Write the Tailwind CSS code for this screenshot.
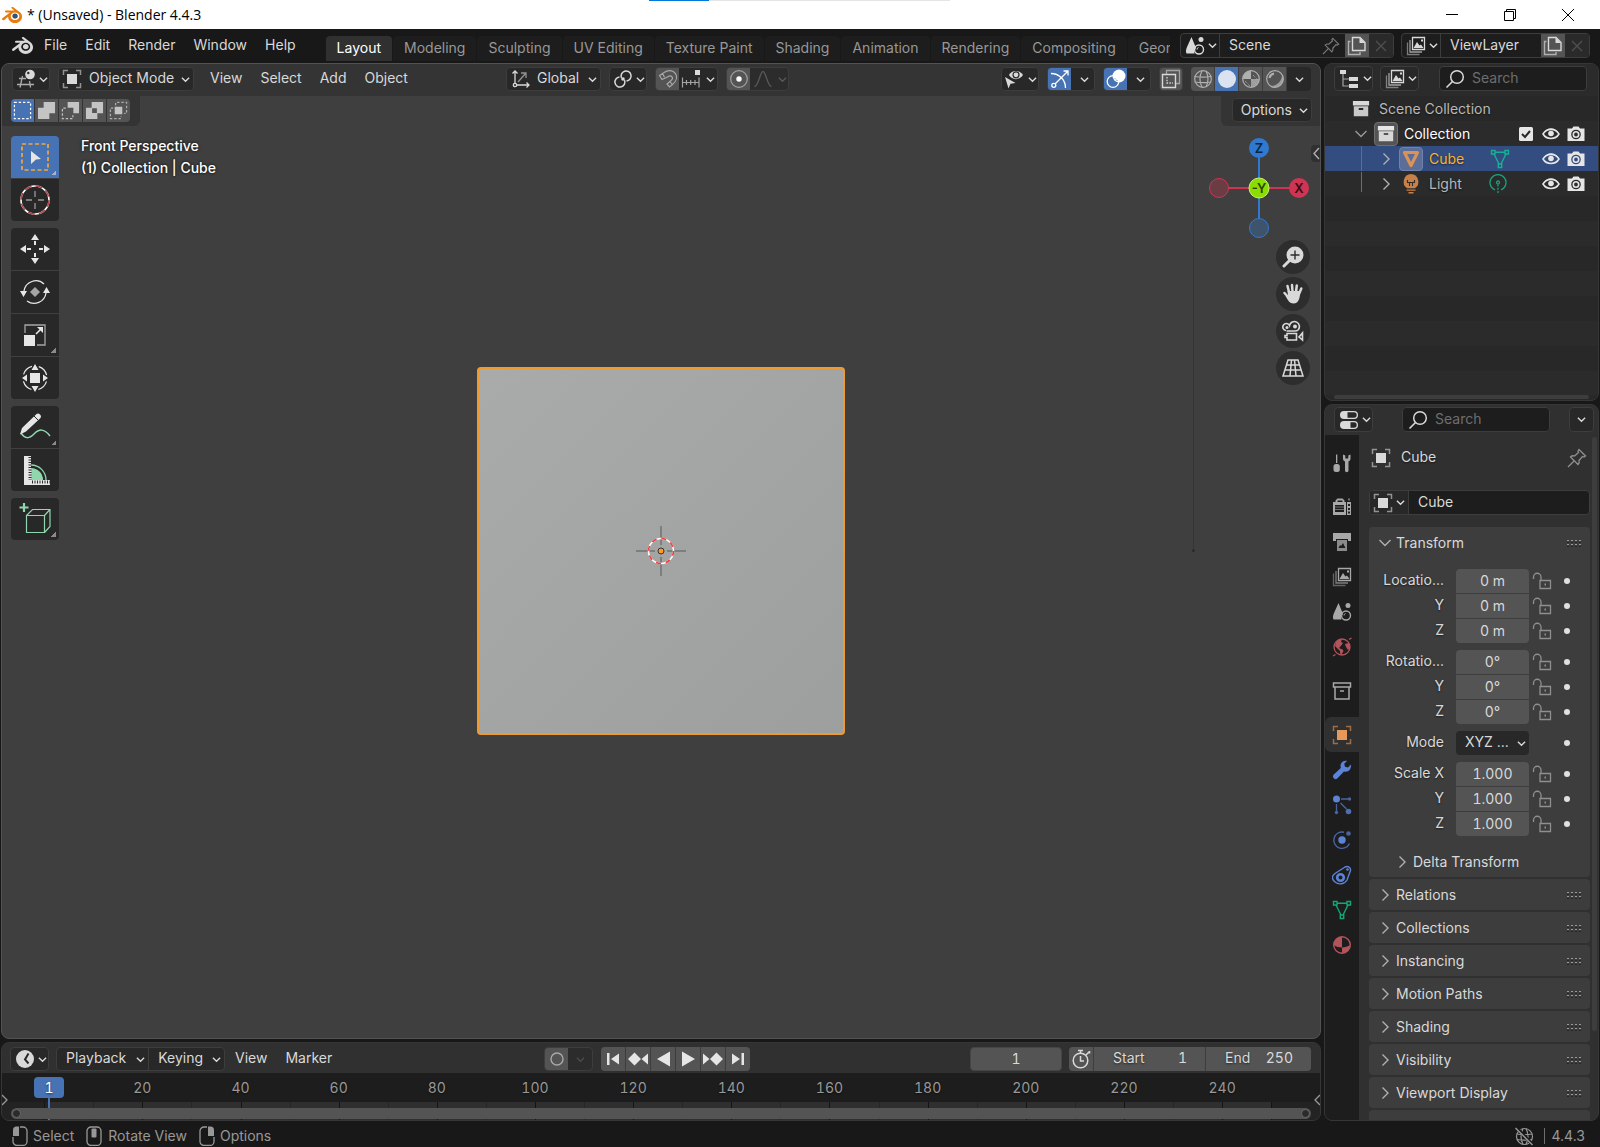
<!DOCTYPE html>
<html lang="en">
<head>
    <meta charset="UTF-8">
    <meta name="viewport" content="width=device-width, initial-scale=1.0">
    <title>* (Unsaved) - Blender 4.4.3</title>
    <script src="https://cdn.jsdelivr.net/npm/@tailwindcss/browser@4"></script>
    <style>
        body { font-family: Inter, sans-serif; }
        input::placeholder { color: #6e6e6e; opacity: 1; }
    </style>
</head>
<body class="flex h-screen flex-col overflow-hidden bg-[#181818] text-sm leading-5 text-[#d9d9d9]">

    <!-- Icon set -->
    <svg class="hidden">
        <symbol id="blender" viewBox="0 0 24 24"><path fill="currentColor" d="M12.51 13.214c.046-.8.438-1.506 1.03-2.006a3.424 3.424 0 0 1 2.212-.79c.85 0 1.631.3 2.211.79.592.5.983 1.206 1.028 2.005.045.823-.285 1.586-.865 2.153a3.389 3.389 0 0 1-2.374.938 3.393 3.393 0 0 1-2.376-.938c-.58-.567-.91-1.33-.865-2.152M7.35 14.831c.006.314.106.922.256 1.398a7.372 7.372 0 0 0 1.593 2.757 8.227 8.227 0 0 0 2.787 2.001 8.947 8.947 0 0 0 3.66.76 8.964 8.964 0 0 0 3.657-.772 8.285 8.285 0 0 0 2.785-2.01 7.428 7.428 0 0 0 1.592-2.762 6.964 6.964 0 0 0 .25-3.074 7.123 7.123 0 0 0-1.016-2.779 7.764 7.764 0 0 0-1.852-2.043h.002L13.566 2.55l-.02-.015c-.492-.378-1.319-.376-1.86.002-.547.382-.609 1.015-.123 1.415l-.001.001 3.126 2.543-9.53.01h-.013c-.788.001-1.545.518-1.695 1.172-.154.665.38 1.217 1.2 1.22V8.9l4.83-.01-8.62 6.617-.034.025c-.813.622-1.075 1.658-.563 2.315.52.667 1.625.668 2.447.004L7.414 14s-.069.52-.063.831zm12.09 1.741c-.97.988-2.326 1.548-3.795 1.55-1.47.004-2.827-.552-3.797-1.538a4.51 4.51 0 0 1-1.036-1.622 4.282 4.282 0 0 1 .282-3.519 4.702 4.702 0 0 1 1.153-1.371c.942-.768 2.141-1.183 3.396-1.185 1.256-.002 2.455.41 3.398 1.175.48.391.87.854 1.152 1.367a4.28 4.28 0 0 1 .522 1.706 4.236 4.236 0 0 1-.239 1.811 4.54 4.54 0 0 1-1.035 1.626"/></symbol>
        <symbol id="down" viewBox="0 0 10 10"><path d="M1 3l4 4 4-4" fill="none" stroke="currentColor" stroke-width="1.5"/></symbol>
        <symbol id="open" viewBox="0 0 14 14"><path d="M1.500 4l5.500 5.500L12.500 4" fill="none" stroke="currentColor" stroke-width="1.400"/></symbol>
        <symbol id="closed" viewBox="0 0 14 14"><path d="M4.500 1.500L10 7l-5.500 5.500" fill="none" stroke="currentColor" stroke-width="1.400"/></symbol>
        <symbol id="grid-ball" viewBox="0 0 20 20"><g fill="none" stroke="currentColor" stroke-width="1.300" opacity=".75"><path d="M3 9.500h7M1 15.500h17M6.500 7L4 18.500M13.500 12l1 6.500"/></g><circle cx="14" cy="5.500" r="4.800" fill="currentColor"/><circle cx="12.300" cy="4" r="1.200" fill="#282828"/></symbol>
        <symbol id="object" viewBox="0 0 20 20"><path d="M1.500 6V1.500H6M14 1.500h4.500V6M18.500 14v4.500H14M6 18.500H1.500V14" fill="none" stroke="currentColor" stroke-width="1.500" opacity=".6"/><path d="M5 5h10v10H5z" fill="currentColor"/></symbol>
        <symbol id="axes" viewBox="0 0 20 20"><g fill="none" stroke="currentColor" stroke-width="1.300"><path d="M4 15V2M1.500 4.500L4 2l2.500 2.500M5.500 16H18M15.500 13.500L18 16l-2.500 2.500"/><circle cx="4" cy="16" r="1.700"/><path d="M7 13l7.500-8.500M10 4h5v5" opacity=".6"/></g></symbol>
        <symbol id="pivot" viewBox="0 0 20 20"><g fill="none" stroke="currentColor" stroke-width="1.500"><path d="M8.500 9a5 5 0 1 1 5 3M11.500 11a5 5 0 1 1-5-3"/></g><circle cx="10" cy="10" r="1.800" fill="currentColor"/></symbol>
        <symbol id="magnet" viewBox="0 0 20 20"><path d="M1.500 6.500L6 3.500c4-2.800 9-2.500 11.500 1.200 2.200 3.500.5 7.800-3 10.800l-3 2.500-2.500-3 3.500-3c2-1.600 2.500-3 1.500-4.200-1.200-1.300-2.800-1-4.500.2L4 10.500zM4.500 4.500l2 3.700M11.500 12l2.700 3.500" fill="none" stroke="currentColor" stroke-width="1.200"/></symbol>
        <symbol id="snap" viewBox="0 0 20 20"><path d="M1.500 8.500v10M18 8.500v10M1.500 13.500H18M5.500 11v5M9.700 11v5M14 11v5" fill="none" stroke="currentColor" stroke-width="1.200" opacity=".7"/><path d="M14 1h5v5h-5z" fill="currentColor"/></symbol>
        <symbol id="proportional" viewBox="0 0 20 20"><circle cx="10" cy="10" r="8.300" fill="none" stroke="currentColor" stroke-width="1.200" opacity=".45"/><circle cx="10" cy="10" r="2.700" fill="currentColor"/></symbol>
        <symbol id="falloff" viewBox="0 0 20 20"><path d="M1.500 17.500C6 16.500 7 2.500 10 2.500s4 14 8.500 15" fill="none" stroke="currentColor" stroke-width="1.300"/></symbol>
        <symbol id="eye-cursor" viewBox="0 0 20 20"><path d="M5 6C8 .500 15.500.500 19 6c-3.500 5.500-11 5.500-14 0z" fill="currentColor"/><circle cx="12" cy="5.800" r="3" fill="none" stroke="#282828" stroke-width="1.200"/><path d="M1 8l10.500 6-5 .800L4.500 19.500z" fill="currentColor"/></symbol>
        <symbol id="gizmo" viewBox="0 0 20 20"><g fill="none" stroke="currentColor" stroke-width="1.300"><path d="M1 4.500c8 0 14.500 6 14.500 14.500M5 15l13-13M13.500 2H18v4.500"/><circle cx="3.800" cy="16.300" r="2" fill="#4772b3"/></g></symbol>
        <symbol id="overlay" viewBox="0 0 20 20"><circle cx="7" cy="12.500" r="5.800" fill="none" stroke="currentColor" stroke-width="1.300"/><circle cx="13" cy="7" r="6.500" fill="currentColor"/><path d="M9 9.500l3 3" stroke="#4772b3" stroke-dasharray="1.200 1.200"/></symbol>
        <symbol id="xray" viewBox="0 0 20 20"><path d="M5.500 5V1.500h13v13H15" fill="none" stroke="currentColor" stroke-width="1.300" opacity=".6"/><path d="M1.500 5.500h13v13h-13z" fill="none" stroke="currentColor" stroke-width="1.400"/><path d="M6 8v6h6" fill="none" stroke="currentColor" stroke-width="1.300" stroke-dasharray="1.500 1.300"/></symbol>
        <symbol id="wire" viewBox="0 0 20 20"><g fill="none" stroke="currentColor" stroke-width="1.200"><circle cx="10" cy="10" r="8.300"/><path d="M1.700 7.500c5 .800 11.600.800 16.600 0M1.700 13c5 .800 11.600.800 16.600 0M9 1.700c-2.500 5-2.500 11.600 0 16.600M13 2c2.500 5 2.500 11 0 16"/></g></symbol>
        <symbol id="solid" viewBox="0 0 20 20"><circle cx="10" cy="10" r="9" fill="currentColor"/></symbol>
        <symbol id="matprev" viewBox="0 0 20 20"><circle cx="10" cy="10" r="8.300" fill="none" stroke="currentColor" stroke-width="1.200"/><path d="M10 1.700A8.300 8.300 0 0 0 1.700 10H10z" fill="currentColor"/><path d="M10 10h8.300A8.300 8.300 0 0 1 10 18.300z" fill="currentColor" opacity=".8"/><path d="M10 10l6 6M12 6l5 5M4 12l5 5" stroke="currentColor" stroke-dasharray="1 1"/></symbol>
        <symbol id="rendered" viewBox="0 0 20 20"><circle cx="10" cy="10" r="8.300" fill="none" stroke="currentColor" stroke-width="1.200"/><path d="M4.500 9c.500-2.500 2-4 4.500-4.500" fill="none" stroke="currentColor" stroke-width="2.200"/><path d="M17 6c0 6-5 11-11 11l4 1.300A8.300 8.300 0 0 0 18.300 10z" fill="currentColor" opacity=".8"/></symbol>
        <symbol id="scene" viewBox="0 0 20 20"><path d="M6.500 1l4.500 11a6 6 0 0 0-1.500 5.500H1.500C.500 15.500 1 13.500 2 11z" fill="currentColor"/><circle cx="16" cy="3.500" r="2.500" fill="currentColor"/><circle cx="14" cy="13.500" r="4.500" fill="none" stroke="currentColor" stroke-width="1.400"/><path d="M12 13.500a2 2 0 0 1 1.500-2" fill="none" stroke="currentColor"/></symbol>
        <symbol id="layers" viewBox="0 0 20 20"><g fill="none" stroke="currentColor" stroke-width="1.300"><path d="M6.500 1.500h12v12h-12z"/><path d="M4 4v12h12" opacity=".7"/><path d="M1.500 6.500v12h12" opacity=".5"/></g><path d="M7.500 12l3.500-6 2.500 3.500 1.500-1 2.500 3.500zM15 3.500h2v2h-2z" fill="currentColor"/></symbol>
        <symbol id="copy" viewBox="0 0 20 20"><path d="M5.500 1.500H13l5 5v8H5.500z" fill="none" stroke="currentColor" stroke-width="1.400"/><path d="M12.500 1.500v5.500H18z" fill="currentColor"/><path d="M3.500 5.500h-2v13H13v-2.500" fill="none" stroke="currentColor" stroke-width="1.400" opacity=".7"/></symbol>
        <symbol id="cross" viewBox="0 0 20 20"><path d="M5 5l10 10M15 5L5 15" stroke="currentColor" stroke-width="1.300"/></symbol>
        <symbol id="pin" viewBox="0 0 20 20"><path d="M1 19l6-6M12 1.500L18.500 8l-1.500 1-1.500-.500-3.500 4c.500 1.500.200 2.700-1 4L3.500 9c1.200-1.200 2.500-1.500 4-1l4-3.500L11 3z" fill="none" stroke="currentColor" stroke-width="1.300"/></symbol>
        <symbol id="tree" viewBox="0 0 20 20"><path d="M1 1h6v4H1zM10 8h9v4h-9zM10 15h9v4h-9z" fill="currentColor"/><path d="M4 5v12h6M4 10h6" fill="none" stroke="currentColor" stroke-width="1.200" opacity=".7"/></symbol>
        <symbol id="search" viewBox="0 0 20 20"><circle cx="12" cy="8" r="6.300" fill="none" stroke="currentColor" stroke-width="1.500"/><path d="M7.500 12.500L1.500 18.500" stroke="currentColor" stroke-width="1.600"/></symbol>
        <symbol id="box" viewBox="0 0 20 20"><path d="M1 1h18v5H1z" fill="currentColor"/><path fill-rule="evenodd" d="M2 7h16v11H2zM7.500 9v2h5V9z" fill="currentColor" opacity=".9"/></symbol>
        <symbol id="box-line" viewBox="0 0 20 20"><path d="M1.500 2h17v4h-17zM3 6v12h14V6" fill="none" stroke="currentColor" stroke-width="1.500"/><path d="M8 10h4" stroke="currentColor" stroke-width="1.500"/></symbol>
        <symbol id="check" viewBox="0 0 14 14"><rect width="14" height="14" rx="1.500" fill="currentColor"/><path d="M3 7l3 3 5-6" fill="none" stroke="#282828" stroke-width="2"/></symbol>
        <symbol id="eye" viewBox="0 0 20 20"><path d="M2 10c3.500-6 12.500-6 16 0-3.500 6-12.500 6-16 0z" fill="none" stroke="currentColor" stroke-width="1.500"/><circle cx="10" cy="9.500" r="2.800" fill="currentColor"/><path d="M3 9c2-3.500 5-4.200 7-4.200S15 5.500 17 9" fill="none" stroke="currentColor" stroke-width="1.200"/></symbol>
        <symbol id="camera" viewBox="0 0 20 20"><path fill-rule="evenodd" d="M1.500 4.500H6L7.500 2.500h5l1.500 2h4.500v12.500h-17zM10 5.700a4.800 4.800 0 1 0 0 9.600 4.800 4.800 0 0 0 0-9.600z" fill="currentColor"/><circle cx="10" cy="10.500" r="2.700" fill="none" stroke="currentColor" stroke-width="1.600"/></symbol>
        <symbol id="mesh-solid" viewBox="0 0 20 20"><path d="M3.500 3.500h13L10 16.500z" fill="none" stroke="currentColor" stroke-width="3.200" stroke-linejoin="round"/></symbol>
        <symbol id="mesh" viewBox="0 0 20 20"><g fill="none" stroke="currentColor" stroke-width="1.400"><path d="M1.500 1.500H5V5H1.500zM15 1.500h3.500V5H15zM8.300 15h3.400v3.500H8.300zM5 3.200h10M4 5l5 10M16 5l-5 10"/></g></symbol>
        <symbol id="bulb" viewBox="0 0 20 20"><path d="M10 0a7.800 7.800 0 0 1 4 14.200H6A7.800 7.800 0 0 1 10 0z" fill="currentColor"/><path d="M6.500 6v2.500h2V12M13.500 6v2.500h-2V12M8.500 8.500h3" fill="none" stroke="#2b2b2b" stroke-width="1.100"/><path d="M5.500 15.500h9v1.300h-9zM7.500 18h5v1.500h-5z" fill="currentColor"/></symbol>
        <symbol id="light-data" viewBox="0 0 20 20"><g fill="none" stroke="currentColor" stroke-width="1.300"><path d="M7 16a8 8 0 1 1 6 0"/><circle cx="10" cy="8.500" r="1.500"/><path d="M10 10.500v9" stroke-dasharray="2 1.300"/></g></symbol>
        <symbol id="props" viewBox="0 0 20 20"><rect x="1" y="1" width="18" height="8" rx="4" fill="currentColor"/><path d="M8.500 2.300H15a2.700 2.700 0 0 1 0 5.400H8.500z" fill="#282828"/><rect x="1" y="11" width="18" height="8" rx="4" fill="currentColor"/><path d="M11.500 12.300H15a2.700 2.700 0 0 1 0 5.400h-3.500z" fill="#282828"/></symbol>
        <symbol id="tool" viewBox="0 0 20 20"><path d="M4 1.500h1.300V10H4z" fill="currentColor"/><rect x="1.500" y="11" width="6.300" height="8" rx="2.500" fill="currentColor"/><path d="M11 1.500v4c0 1.500.800 2.500 2 3v9a1.500 1.500 0 0 0 3.500 0v-9c1.200-.500 2-1.500 2-3v-4l-2.200 1v3h-3v-3z" fill="currentColor"/></symbol>
        <symbol id="render" viewBox="0 0 20 20"><path fill-rule="evenodd" d="M1 5h2.500V3.500l2-2h5l2 2V5H14v13H1zM5.500 3.500V5h5V3.500z" fill="currentColor"/><path d="M3 8h9v7H3z" fill="#1d1d1d"/><path d="M3 10h9M3 12.500h9" stroke="currentColor" stroke-width=".6"/><path fill-rule="evenodd" d="M15 5h4v13h-4zM16 7v2h2V7zm0 4v2h2v-2zm0 3.500v2h2v-2z" fill="currentColor"/><path d="M16 1.500h2v2h-2z" fill="currentColor" opacity=".6"/></symbol>
        <symbol id="output" viewBox="0 0 20 20"><path d="M1 1h18v8h-3V7H4v2H1z" fill="currentColor"/><path fill-rule="evenodd" d="M5 8h10v11H5zM6.500 16h7L11 11l-2 3-1-1z" fill="currentColor" opacity=".8"/></symbol>
        <symbol id="world" viewBox="0 0 20 20"><circle cx="10" cy="10" r="8" fill="none" stroke="currentColor" stroke-width="1.300"/><path d="M4 5c2-2 4-3 6-3l-1 3 2 1-3 4-1 1 2 1c2 0 3 2 2 3l-2 3c-1-1-1-3-1-4L3 9zM13 7l4-1 1 5-2 2-2-3z" fill="currentColor"/><path d="M17 2.500L19.500 1M1 19l2.500-1.500" stroke="currentColor" stroke-width="1.300"/></symbol>
        <symbol id="wrench" viewBox="0 0 20 20"><path d="M19 4.500l-3 3-3-.700-.800-3 3-3C12 0 8.500 2 8.500 6l.300 2L1.800 14.500a2.600 2.600 0 0 0 3.700 3.700L12 11.500c4.500 1 7.500-2 7-7z" fill="currentColor"/></symbol>
        <symbol id="particles" viewBox="0 0 20 20"><circle cx="4.500" cy="4" r="3.500" fill="currentColor"/><circle cx="16.500" cy="16.500" r="2.800" fill="currentColor" opacity=".8"/><g fill="none" stroke="currentColor" stroke-width="1.300" opacity=".7"><path d="M9 4h7M4.500 9v7M8.500 8l6 6"/></g><g fill="currentColor" opacity=".7"><circle cx="17.500" cy="4" r="1.700"/><circle cx="4.500" cy="17.500" r="1.700"/></g></symbol>
        <symbol id="physics" viewBox="0 0 20 20"><circle cx="10" cy="10" r="3.700" fill="currentColor"/><g opacity=".7"><path d="M12 2.200A8.200 8.200 0 1 0 17.500 13.500" fill="none" stroke="currentColor" stroke-width="1.400"/><circle cx="16.500" cy="3.500" r="2.300" fill="currentColor"/></g></symbol>
        <symbol id="constraint" viewBox="0 0 20 20"><g fill="none" stroke="currentColor"><path d="M3 8.500L13 2c3-1.500 6 .500 5.500 3.500L15 15c-2.500 4.500-8.500 5-12 2s-3.500-6 0-8.500z" stroke-width="1.400"/><circle cx="8.500" cy="12.500" r="3.300" stroke-width="2.600"/></g><circle cx="15.500" cy="4.500" r="1.300" fill="currentColor"/></symbol>
        <symbol id="material" viewBox="0 0 20 20"><circle cx="10" cy="10" r="8.300" fill="none" stroke="currentColor" stroke-width="1.400"/><path d="M10 1.700A8.300 8.300 0 0 0 1.700 10c2.500 1.800 5.500 2.500 8.300 2.500zM10 12.500c3-.100 6-.800 8.300-2.500a8.300 8.300 0 0 1-8.300 8.300z" fill="currentColor"/></symbol>
        <symbol id="unlock" viewBox="0 0 20 20"><path d="M1.500 8V6a3.700 3.700 0 0 1 7.500 0V9.500M8 9.500h10.500v8H8z" fill="none" stroke="currentColor" stroke-width="1.300"/><path d="M12.500 12.500h1.500v2h-1.500z" fill="currentColor"/></symbol>
        <symbol id="grip" viewBox="0 0 16 8"><g fill="#999"><path d="M1 1h2v1.500H1zM5 1h2v1.500H5zM9 1h2v1.500H9zM13 1h2v1.500h-2zM1 5h2v1.500H1zM5 5h2v1.500H5zM9 5h2v1.500H9zM13 5h2v1.500h-2z"/></g><path d="M1 3h14M1 7h14" stroke="#111" stroke-dasharray="2 2"/></symbol>
        <symbol id="clock" viewBox="0 0 20 20"><circle cx="10" cy="10" r="9" fill="currentColor"/><path d="M13.500 4.500L10 10.500l3.500 4" fill="none" stroke="#282828" stroke-width="2"/></symbol>
        <symbol id="stopwatch" viewBox="0 0 20 20"><g fill="none" stroke="currentColor" stroke-width="1.500"><circle cx="9.500" cy="11.500" r="7.300"/><path d="M9.500 7v5H13M7 1.500h5M9.500 2v2.500M15 6l3-3M18.500 2v2.500"/></g></symbol>
        <symbol id="mouse-l" viewBox="0 0 16 20"><rect x="1" y="1" width="14" height="18.500" rx="4" fill="none" stroke="currentColor" stroke-width="1.300"/><path d="M0 0h8v11H0z" fill="#181818"/><path d="M1 10V4a3.500 3.500 0 0 1 3.500-3.500H7V10z" fill="currentColor"/></symbol>
        <symbol id="mouse-m" viewBox="0 0 16 20"><rect x="1" y="1" width="14" height="18.500" rx="4" fill="none" stroke="currentColor" stroke-width="1.300"/><rect x="5.500" y="2.500" width="5" height="9" rx="1" fill="currentColor"/></symbol>
        <symbol id="mouse-r" viewBox="0 0 16 20"><rect x="1" y="1" width="14" height="18.500" rx="4" fill="none" stroke="currentColor" stroke-width="1.300"/><path d="M8 0h8v11H8z" fill="#181818"/><path d="M9 10V.500h2.500A3.500 3.500 0 0 1 15 4v6z" fill="currentColor"/></symbol>
        <symbol id="offline" viewBox="0 0 20 20"><g fill="none" stroke="currentColor" stroke-width="1.200"><circle cx="10.500" cy="10.500" r="8"/><path d="M2.500 8c5 .700 11 .700 16 0M3 13.500c5 .700 10 .700 15 0M9 2.500c-2.500 5-2.500 11 0 16M12 2.500c2.500 5 2.500 11 0 16"/></g><path d="M2 1l17 18" stroke="#181818" stroke-width="3"/><path d="M1.500 2l17 17" stroke="currentColor" stroke-width="1.400"/></symbol>
    </svg>

    <!-- Window title bar -->
    <header class="relative flex h-[29px] shrink-0 items-center bg-white text-black">
        <svg class="ml-[2px] size-5"><g class="text-[#e87d0d]"><use href="#blender"/></g><circle cx="13" cy="11" r="2.500" fill="#265787"/></svg>
        <span class="ml-[5px] font-['Open_Sans'] text-sm">* (Unsaved) - Blender 4.4.3</span>
        <div class="absolute left-[649px] top-0 flex h-px w-[301px] bg-[#e5e5e5]"><div class="w-[60px] bg-[#0078d7]"></div></div>
        <div class="ml-auto flex items-center gap-[46px] pr-[26px]">
            <button aria-label="Minimize"><svg class="size-3" viewBox="0 0 12 12"><path d="M0 5.500h12" stroke="#000"/></svg></button>
            <button aria-label="Restore"><svg class="size-3" viewBox="0 0 12 12"><path d="M.500 2.500h9v9h-9zM2.500 2.500v-2h9v9h-2" fill="none" stroke="#000"/></svg></button>
            <button aria-label="Close"><svg class="size-3" viewBox="0 0 12 12"><path d="M0 0l12 12M12 0L0 12" stroke="#000"/></svg></button>
        </div>
    </header>

    <!-- Top bar -->
    <div class="flex h-[34px] shrink-0 [text-shadow:0_1px_2px_#000]">
        <nav class="flex h-8 shrink-0 items-center pl-3">
            <button class="mr-[11px]" aria-label="Blender"><svg class="size-[21px]"><use href="#blender"/></svg></button>
            <div class="flex gap-[18px] pr-[30px]">
                <button>File</button><button>Edit</button><button>Render</button><button>Window</button><button>Help</button>
            </div>
        </nav>
        <div class="mt-[7px] flex h-[25px] min-w-0 flex-1 gap-px overflow-hidden whitespace-nowrap text-[#989898]">
            <button class="shrink-0 rounded-t bg-[#303030] px-[11px] pb-[2px] text-white">Layout</button>
            <button class="shrink-0 rounded-t bg-[#1d1d1d] px-[11px] pb-[2px]">Modeling</button>
            <button class="shrink-0 rounded-t bg-[#1d1d1d] px-[11px] pb-[2px]">Sculpting</button>
            <button class="shrink-0 rounded-t bg-[#1d1d1d] px-[11px] pb-[2px]">UV Editing</button>
            <button class="shrink-0 rounded-t bg-[#1d1d1d] px-[11px] pb-[2px]">Texture Paint</button>
            <button class="shrink-0 rounded-t bg-[#1d1d1d] px-[11px] pb-[2px]">Shading</button>
            <button class="shrink-0 rounded-t bg-[#1d1d1d] px-[11px] pb-[2px]">Animation</button>
            <button class="shrink-0 rounded-t bg-[#1d1d1d] px-[11px] pb-[2px]">Rendering</button>
            <button class="shrink-0 rounded-t bg-[#1d1d1d] px-[11px] pb-[2px]">Compositing</button>
            <button class="shrink-0 rounded-t bg-[#1d1d1d] px-[11px] pb-[2px]">Geometry Nodes</button>
        </div>
        <div class="mt-1 flex shrink-0 gap-[7px] pl-[10px] pr-[10px]">
            <div class="flex h-[25px] w-[214px] overflow-hidden rounded border border-[#3d3d3d] bg-[#1d1d1d]">
                <button class="flex w-[39px] items-center gap-[3px] border-r border-[#3d3d3d] pl-1" aria-label="Browse scene"><svg class="size-5"><use href="#scene"/></svg><svg class="size-[9px]"><use href="#down"/></svg></button>
                <input class="min-w-0 flex-1 bg-transparent pb-[2px] pl-[9px] outline-none" value="Scene" aria-label="Scene">
                <button class="px-[5px] text-[#7a7a7a]" aria-label="Pin scene"><svg class="size-[18px]"><use href="#pin"/></svg></button>
                <button class="flex w-6 items-center justify-center bg-[#545454]" aria-label="New scene"><svg class="size-5"><use href="#copy"/></svg></button>
                <button class="flex w-6 items-center justify-center bg-[#2a2a2a] text-[#505050]" aria-label="Delete scene"><svg class="size-5"><use href="#cross"/></svg></button>
            </div>
            <div class="flex h-[25px] w-[189px] overflow-hidden rounded border border-[#3d3d3d] bg-[#1d1d1d]">
                <button class="flex w-[39px] items-center gap-[3px] border-r border-[#3d3d3d] pl-1" aria-label="Browse view layer"><svg class="size-5"><use href="#layers"/></svg><svg class="size-[9px]"><use href="#down"/></svg></button>
                <input class="min-w-0 flex-1 bg-transparent pb-[2px] pl-[9px] outline-none" value="ViewLayer" aria-label="View layer">
                <button class="flex w-6 items-center justify-center bg-[#545454]" aria-label="New view layer"><svg class="size-5"><use href="#copy"/></svg></button>
                <button class="flex w-6 items-center justify-center bg-[#2a2a2a] text-[#505050]" aria-label="Delete view layer"><svg class="size-5"><use href="#cross"/></svg></button>
            </div>
        </div>
    </div>

    <main class="flex min-h-0 flex-1 gap-[3px] px-px [text-shadow:0_1px_2px_#0008]">
        <div class="flex min-w-0 flex-1 flex-col gap-[3px]">

            <!-- 3D viewport -->
            <section class="relative flex min-h-0 flex-1 flex-col overflow-hidden rounded-lg border border-[#525252] bg-[#3f3f3f]">
                <div class="absolute bottom-1/2 right-[126px] top-8 w-px bg-[#343434]"><span class="absolute -bottom-px -left-px size-[3px] rounded-full bg-[#2b2b2b]"></span></div>
                <div class="absolute inset-0 flex items-center justify-center">
                    <div class="flex size-[368px] items-center justify-center rounded-sm border-2 border-[#ef9a31] bg-linear-to-br from-[#a9abaa] to-[#9d9f9e]">
                        <svg class="size-[52px]" viewBox="-26 -26 52 52"><path d="M-25 0h19M6 0h19M0-25v19M0 6v19" stroke="#727372" stroke-width="1.500"/><circle r="12.500" fill="none" stroke="#fff" stroke-width="1.500"/><circle r="12.500" fill="none" stroke="#f33" stroke-width="1.500" stroke-dasharray="4.900 4.917"/><circle r="3" fill="#ff9a1f" stroke="#333"/></svg>
                    </div>
                </div>

                <div class="relative flex h-8 shrink-0 items-start bg-[#343434] pl-[10px] pr-[9px] pt-[3px]">
                    <div class="flex w-[494px] shrink-0 items-center gap-4">
                        <div class="flex gap-2">
                            <button class="flex h-6 w-[38px] items-center gap-[3px] rounded border border-[#3d3d3d] bg-[#282828] pl-[3px]" aria-label="Editor type"><svg class="size-5"><use href="#grid-ball"/></svg><svg class="size-[9px]"><use href="#down"/></svg></button>
                            <label class="flex h-6 w-[136px] items-center rounded border border-[#3d3d3d] bg-[#282828] pl-[3px] pr-[3px]" aria-label="Mode"><svg class="size-5 shrink-0"><use href="#object"/></svg><select class="min-w-0 flex-1 appearance-none pb-[2px] pl-[7px] outline-none"><option>Object Mode</option><option>Edit Mode</option></select><svg class="size-[9px]"><use href="#down"/></svg></label>
                        </div>
                        <div class="flex gap-[18px] pb-[2px]"><button>View</button><button>Select</button><button>Add</button><button>Object</button></div>
                    </div>
                    <div class="flex gap-2">
                        <label class="flex h-6 w-[95px] items-center rounded border border-[#3d3d3d] bg-[#282828] pl-1 pr-[3px]" aria-label="Orientation"><svg class="size-5 shrink-0"><use href="#axes"/></svg><select class="min-w-0 flex-1 appearance-none pb-[2px] pl-[6px] outline-none"><option>Global</option><option>Local</option></select><svg class="size-[9px] shrink-0"><use href="#down"/></svg></label>
                        <button class="flex h-6 w-[38px] items-center gap-[3px] rounded border border-[#3d3d3d] bg-[#282828] pl-[3px]" aria-label="Pivot point"><svg class="size-5"><use href="#pivot"/></svg><svg class="size-[9px]"><use href="#down"/></svg></button>
                        <div class="flex h-6 overflow-hidden rounded border border-[#3d3d3d] bg-[#282828]">
                            <button class="flex w-[23px] items-center justify-center bg-[#545454] text-[#a8a8a8]" aria-label="Snap"><svg class="size-5"><use href="#magnet"/></svg></button>
                            <button class="flex w-[38px] items-center gap-[5px] pl-[2px]" aria-label="Snap to"><svg class="size-5"><use href="#snap"/></svg><svg class="size-[9px]"><use href="#down"/></svg></button>
                        </div>
                        <div class="flex h-6 overflow-hidden rounded border border-[#3d3d3d] bg-[#2c2c2c]">
                            <button class="flex w-[23px] items-center justify-center bg-[#545454] text-white" aria-label="Proportional editing"><svg class="size-5"><use href="#proportional"/></svg></button>
                            <button class="flex w-[38px] items-center gap-[5px] pl-[3px] text-[#585858]" aria-label="Falloff"><svg class="size-5"><use href="#falloff"/></svg><svg class="size-[9px]"><use href="#down"/></svg></button>
                        </div>
                    </div>
                    <div class="ml-auto flex gap-2">
                        <button class="flex h-6 w-[38px] items-center gap-1 rounded border border-[#3d3d3d] bg-[#282828] pl-[2px]" aria-label="Visibility"><svg class="size-5"><use href="#eye-cursor"/></svg><svg class="size-[9px]"><use href="#down"/></svg></button>
                        <div class="flex h-6 overflow-hidden rounded border border-[#3d3d3d] bg-[#282828]">
                            <button class="flex w-[23px] items-center justify-center bg-[#4772b3] text-white" aria-label="Gizmos"><svg class="size-5"><use href="#gizmo"/></svg></button>
                            <button class="flex w-[23px] items-center justify-center pl-[3px]" aria-label="Gizmo options"><svg class="size-[9px]"><use href="#down"/></svg></button>
                        </div>
                        <div class="flex h-6 overflow-hidden rounded border border-[#3d3d3d] bg-[#282828]">
                            <button class="flex w-[23px] items-center justify-center bg-[#4772b3] text-white" aria-label="Overlays"><svg class="size-5"><use href="#overlay"/></svg></button>
                            <button class="flex w-[23px] items-center justify-center pl-[3px]" aria-label="Overlay options"><svg class="size-[9px]"><use href="#down"/></svg></button>
                        </div>
                        <button class="flex size-6 items-center justify-center rounded border border-[#3d3d3d] bg-[#545454]" aria-label="X-ray"><svg class="size-5"><use href="#xray"/></svg></button>
                        <div class="flex h-6 gap-px overflow-hidden rounded bg-[#3d3d3d] text-[#b0b0b0]">
                            <button class="flex w-[23px] items-center justify-center bg-[#545454]" aria-label="Wireframe"><svg class="size-5"><use href="#wire"/></svg></button>
                            <button class="flex w-[23px] items-center justify-center bg-[#4772b3] text-[#dbe3f0]" aria-label="Solid"><svg class="size-5"><use href="#solid"/></svg></button>
                            <button class="flex w-[23px] items-center justify-center bg-[#545454]" aria-label="Material preview"><svg class="size-5"><use href="#matprev"/></svg></button>
                            <button class="flex w-[23px] items-center justify-center bg-[#545454]" aria-label="Rendered"><svg class="size-5"><use href="#rendered"/></svg></button>
                            <button class="flex w-6 items-center justify-center bg-[#282828] text-[#d9d9d9]" aria-label="Shading options"><svg class="size-[9px]"><use href="#down"/></svg></button>
                        </div>
                    </div>
                </div>

                <div class="relative flex justify-between">
                    <div class="h-[30px] rounded-br-md bg-[#343434] pl-[9px] pr-[10px] pt-[3px]">
                        <div class="flex h-[23px] gap-px overflow-hidden rounded text-[#c4c4c4]">
                            <button class="bg-[#4772b3] px-[2px] text-white" aria-label="Set"><svg class="size-[19px]" viewBox="0 0 20 20"><path d="M1.500 1.500h17v17h-17z" fill="none" stroke="currentColor" stroke-width="1.300" stroke-dasharray="2.500 2"/></svg></button>
                            <button class="bg-[#545454] px-[2px]" aria-label="Extend"><svg class="size-[19px]" viewBox="0 0 20 20"><path d="M7 1h12v12h-6v6H1V7h6z" fill="currentColor"/></svg></button>
                            <button class="bg-[#545454] px-[2px]" aria-label="Subtract"><svg class="size-[19px]" viewBox="0 0 20 20"><path d="M7 1h12v12h-6V7H7z" fill="currentColor"/><path d="M5 7.500H1.500v11h11V15" fill="none" stroke="currentColor" stroke-width="1.300" stroke-dasharray="2.500 2"/></svg></button>
                            <button class="bg-[#545454] px-[2px]" aria-label="Invert"><svg class="size-[19px]" viewBox="0 0 20 20"><path fill-rule="evenodd" d="M7 1h12v12h-6v6H1V7h6zM7.500 7.500v5h5v-5z" fill="currentColor"/></svg></button>
                            <button class="bg-[#545454] px-[2px]" aria-label="Intersect"><svg class="size-[19px]" viewBox="0 0 20 20"><path d="M6 6h8v8H6z" fill="currentColor"/><path d="M7 4.500V1.500h11.500V13H16M4.500 7.500h-3v11h11V16" fill="none" stroke="currentColor" stroke-width="1.300" stroke-dasharray="2.500 2" opacity=".8"/></svg></button>
                        </div>
                    </div>
                    <div class="h-[30px] rounded-bl-md bg-[#343434] pl-[11px] pr-2 pt-[2px]">
                        <button class="flex h-6 items-center gap-[7px] rounded border border-[#3d3d3d] bg-[#282828] pl-2 pr-[3px]">Options<svg class="size-[9px]"><use href="#down"/></svg></button>
                    </div>
                </div>

                <div class="relative mt-[10px] flex items-start pl-[9px] pr-[10px]">
                    <!-- Tool shelf -->
                    <div class="flex w-12 flex-col gap-[7px] text-[#e6e6e6]">
                        <div class="flex flex-col gap-px overflow-hidden rounded">
                            <button class="relative flex h-[42px] items-center justify-center bg-[#4772b3]" aria-label="Select box"><svg class="size-[30px]" viewBox="0 0 30 30"><path d="M2 2h26v26H2z" fill="none" stroke="#f0a93c" stroke-width="1.700" stroke-dasharray="4 2.500"/><path d="M11 9l10 8-5 .500L11 22z" fill="currentColor"/></svg><span class="absolute bottom-[3px] right-[3px] size-[5px] bg-[linear-gradient(135deg,transparent_50%,#a3b4d3_50%)]"></span></button>
                            <button class="flex h-[42px] items-center justify-center bg-[#282828]" aria-label="Cursor"><svg class="size-[30px]" viewBox="-15 -15 30 30"><circle r="14" fill="none" stroke="#fff" stroke-width="1.600"/><circle r="14" fill="none" stroke="#a8474b" stroke-width="1.600" stroke-dasharray="7 4"/><path d="M-9 0h6M3 0h6M0-9v6M0 3v6" stroke="#999" stroke-width="1.300"/></svg></button>
                        </div>
                        <div class="flex flex-col gap-px overflow-hidden rounded">
                            <button class="flex h-[42px] items-center justify-center bg-[#282828]" aria-label="Move"><svg class="size-[30px]" viewBox="-15 -15 30 30"><path d="M-4-9L0-15l4 6zM-4 9L0 15l4-6zM-9-4L-15 0l6 4zM9-4l6 4-6 4z" fill="currentColor"/><path d="M0-8v4M0 4v4M-8 0h4M4 0h4" stroke="currentColor" stroke-width="2"/></svg></button>
                            <button class="flex h-[42px] items-center justify-center bg-[#282828]" aria-label="Rotate"><svg class="size-[30px]" viewBox="-15 -15 30 30"><path d="M-11-1A12 12 0 0 1 9-8M11 1A12 12 0 0 1-8 9" fill="none" stroke="currentColor" stroke-width="1.300"/><path d="M-15-1h7l-3.500 6zM15 1H8l3.500-6z" fill="currentColor"/><path d="M0-5l5 5-5 5-5-5z" fill="#a5a5a5"/></svg></button>
                            <button class="relative flex h-[42px] items-center justify-center bg-[#282828]" aria-label="Scale"><svg class="size-[30px]" viewBox="0 0 30 30"><path d="M5 13V5h20v20h-8" fill="none" stroke="#a5a5a5" stroke-width="1.300"/><path d="M4 15h11v11H4zM23 7v6l-6-6z" fill="currentColor"/><path d="M16 14l5-5" stroke="currentColor" stroke-width="1.600"/></svg><span class="absolute bottom-[3px] right-[3px] size-[5px] bg-[linear-gradient(135deg,transparent_50%,#8a8a8a_50%)]"></span></button>
                            <button class="flex h-[42px] items-center justify-center bg-[#282828]" aria-label="Transform"><svg class="size-[30px]" viewBox="-15 -15 30 30"><circle r="12" fill="none" stroke="currentColor" stroke-width="1.200" stroke-dasharray="11.800 7.050" stroke-dashoffset="-3.500"/><path d="M-5-5H5V5H-5zM-3.500-8L0-14l3.500 6zM-3.500 8L0 14l3.500-6zM-8-3.500L-13 0l5 3.500zM8-3.500L13 0 8 3.500z" fill="currentColor"/></svg></button>
                        </div>
                        <div class="flex flex-col gap-px overflow-hidden rounded">
                            <button class="relative flex h-[42px] items-center justify-center bg-[#282828]" aria-label="Annotate"><svg class="size-8" viewBox="0 0 32 32"><path d="M2 22c4 6 8 6 13 1s10-6 16 2" fill="none" stroke="#8fd8ae" stroke-width="1.500"/><path d="M1 23.500L3 17 17 3.500a2.500 2.500 0 0 1 4 4L7 20.500z" fill="currentColor"/><path d="M15 5l4.500 4.500" stroke="#282828"/></svg><span class="absolute bottom-[3px] right-[3px] size-[5px] bg-[linear-gradient(135deg,transparent_50%,#8a8a8a_50%)]"></span></button>
                            <button class="flex h-[42px] items-center justify-center bg-[#282828]" aria-label="Measure"><svg class="size-[30px]" viewBox="0 0 30 30"><path d="M11 13a12 12 0 0 1 12 12H11z" fill="#8fd8ae"/><path d="M11 10a15 15 0 0 1 15 15" fill="none" stroke="#8fd8ae" stroke-width="1.300"/><path d="M4 1h7v24h19v5H4z" fill="currentColor"/><path d="M10 2v23M12 27h18" fill="none" stroke="#282828" stroke-width="3" stroke-dasharray="1 1.500"/></svg></button>
                        </div>
                        <button class="relative flex h-[42px] items-center justify-center rounded bg-[#282828]" aria-label="Add cube"><svg class="size-8" viewBox="0 0 32 32"><path d="M7.500 12.500h18v17h-18zM7.500 12.500l6-6h17.500v17l-5.500 6M25.500 12.500l5.500-6" fill="none" stroke="#8fd8ae" stroke-width="1.200"/><path d="M5 0v9M.500 4.500h9" stroke="#8fd8ae" stroke-width="2.200"/></svg><span class="absolute bottom-[3px] right-[3px] size-[5px] bg-[linear-gradient(135deg,transparent_50%,#8a8a8a_50%)]"></span></button>
                    </div>
                    <div class="-mt-px ml-[22px] font-medium leading-[22px] text-white [text-shadow:0_0_3px_#000]"><p>Front Perspective</p><p>(1) Collection | Cube</p></div>

                    <!-- Navigation gizmo -->
                    <div class="ml-auto flex flex-col items-end gap-[3px] pt-px">
                        <svg class="-mb-[2px] size-[102px] font-semibold [text-shadow:none]" viewBox="-51 -51 102 102">
                            <path d="M0-40v80" stroke="#2f7ad0" stroke-width="2"/><path d="M-40 0h80" stroke="#cf3552" stroke-width="2"/>
                            <circle cy="-40" r="10" fill="#2f7ad0"/><circle cx="40" r="10" fill="#cf3552"/>
                            <circle cx="-40" r="9.500" fill="#6b3c44" stroke="#cf3552"/><circle cy="40" r="9.500" fill="#3e536c" stroke="#2f7ad0"/>
                            <circle r="10" fill="#8bdc00" stroke="#c4f07a"/>
                            <g text-anchor="middle" font-size="13"><text y="-35" fill="#0c2440">Z</text><text x="40" y="5" fill="#3d0a15">X</text><text y="5" fill="#2a4200">-Y</text></g>
                        </svg>
                        <button class="flex size-[34px] items-center justify-center rounded-full bg-[#2d2d2d]" aria-label="Zoom"><svg class="size-[22px]" viewBox="0 0 22 22"><circle cx="13" cy="9" r="8.500" fill="currentColor"/><path d="M8 14l-6 6" stroke="currentColor" stroke-width="3" stroke-linecap="round"/><path d="M13 4.500v9M8.500 9h9" stroke="#2d2d2d" stroke-width="1.400"/></svg></button>
                        <button class="flex size-[34px] items-center justify-center rounded-full bg-[#2d2d2d]" aria-label="Pan"><svg class="size-[22px]" viewBox="0 0 22 22"><path d="M7 9L5.500 3M10.500 8.500L10 2M14 9l.800-6.500M17 11l2.300-5.500M7 15l-4.500-5" stroke="currentColor" stroke-width="2.500" stroke-linecap="round"/><path d="M5.500 8h12.700c0 6-1.200 12.500-6.700 12.500-4 0-5.500-3-8-7.500l2.500-1z" fill="currentColor"/></svg></button>
                        <button class="flex size-[34px] items-center justify-center rounded-full bg-[#2d2d2d]" aria-label="Camera view"><svg class="size-[22px]" viewBox="0 0 22 22"><g fill="none" stroke="currentColor" stroke-width="1.600"><path d="M4 10.500a3.500 3.500 0 1 1 3.500-5 5 5 0 1 1 8.500 4.500c-1 .800-2 1-3 1H4.500M5 13.500h9.500v6.500H5v-2.500H3v-2h2zM20.500 13v7L17 17z"/></g><circle cx="5" cy="7.500" r="1.500" fill="currentColor"/><circle cx="13" cy="6.500" r="2" fill="currentColor"/></svg></button>
                        <button class="flex size-[34px] items-center justify-center rounded-full bg-[#2d2d2d]" aria-label="Perspective"><svg class="size-[22px]" viewBox="0 0 22 22"><path d="M6 3h10l5 16H1zM4.500 8h13M3 13h16M9.500 3L8 19M12.500 3L14 19" fill="none" stroke="currentColor" stroke-width="1.500"/></svg></button>
                    </div>
                </div>
                <button class="absolute right-0 top-[81px] flex h-[17px] w-[9px] items-center rounded-l bg-[#303030] text-[#b0b0b0]" aria-label="Show sidebar"><svg class="h-[13px] w-[9px]" viewBox="0 0 9 13"><path d="M8 1L3 6.500 8 12" fill="none" stroke="currentColor" stroke-width="1.400"/></svg></button>
            </section>

            <!-- Timeline -->
            <section class="relative flex h-[79px] shrink-0 flex-col overflow-hidden rounded-lg border border-[#363636] bg-[#303030]">
                <div class="flex h-[30px] shrink-0 items-start pl-2 pr-2 pt-1">
                    <div class="flex w-[534px] shrink-0 items-center">
                        <button class="flex h-6 w-[39px] items-center gap-[3px] rounded border border-[#3d3d3d] bg-[#282828] pl-1" aria-label="Editor type"><svg class="size-5"><use href="#clock"/></svg><svg class="size-[9px]"><use href="#down"/></svg></button>
                        <div class="ml-[7px] mr-[10px] flex h-6 rounded border border-[#3d3d3d] bg-[#282828]">
                            <button class="flex items-center gap-[10px] border-r border-[#3d3d3d] pl-[9px] pr-[3px]"><span class="pb-[2px]">Playback</span><svg class="size-[9px]"><use href="#down"/></svg></button>
                            <button class="flex items-center gap-[9px] pl-[9px] pr-[3px]"><span class="pb-[2px]">Keying</span><svg class="size-[9px]"><use href="#down"/></svg></button>
                        </div>
                        <div class="flex gap-[18px] pb-[2px]"><button>View</button><button>Marker</button></div>
                    </div>
                    <div class="flex gap-2">
                        <div class="flex h-6 overflow-hidden rounded border border-[#3d3d3d] bg-[#2c2c2c]">
                            <button class="flex w-[23px] items-center justify-center bg-[#545454] text-[#a8a8a8]" aria-label="Auto keying"><svg class="size-5" viewBox="0 0 20 20"><circle cx="10" cy="10" r="6" fill="none" stroke="currentColor" stroke-width="1.400"/></svg></button>
                            <button class="flex w-6 items-center justify-center text-[#4a4a4a]" aria-label="Auto keying options"><svg class="size-[9px]"><use href="#down"/></svg></button>
                        </div>
                        <div class="flex h-6 gap-px overflow-hidden rounded bg-[#3d3d3d] text-[#e6e6e6]">
                            <button class="w-6 bg-[#545454] pl-[2px]" aria-label="Jump to start"><svg class="size-5" viewBox="0 0 20 20"><path d="M4 4h2.500v12H4zM16 4.500v11L8 10z" fill="currentColor"/></svg></button>
                            <button class="w-6 bg-[#545454] pl-[2px]" aria-label="Previous keyframe"><svg class="size-5" viewBox="0 0 20 20"><path d="M6.500 3.500L13 10l-6.500 6.500L0 10zM20 4.500v11L13.500 10z" fill="currentColor"/></svg></button>
                            <button class="w-6 bg-[#545454] pl-[2px]" aria-label="Play reverse"><svg class="size-5" viewBox="0 0 20 20"><path d="M17 2.500v15L4 10z" fill="currentColor"/></svg></button>
                            <button class="w-6 bg-[#545454] pl-[2px]" aria-label="Play"><svg class="size-5" viewBox="0 0 20 20"><path d="M4 2.500v15L17 10z" fill="currentColor"/></svg></button>
                            <button class="w-6 bg-[#545454] pl-[2px]" aria-label="Next keyframe"><svg class="size-5" viewBox="0 0 20 20"><path d="M13.500 3.500L20 10l-6.500 6.500L7 10zM0 4.500v11L6.500 10z" fill="currentColor"/></svg></button>
                            <button class="w-6 bg-[#545454] pl-[2px]" aria-label="Jump to end"><svg class="size-5" viewBox="0 0 20 20"><path d="M13.500 4H16v12h-2.500zM4 4.500v11L12 10z" fill="currentColor"/></svg></button>
                        </div>
                    </div>
                    <div class="ml-auto flex gap-[7px] pr-px">
                        <input class="h-6 w-[92px] rounded border border-[#454545] bg-[#545454] pb-[2px] text-center tabular-nums outline-none" value="1" aria-label="Current frame">
                        <div class="flex h-6 gap-px overflow-hidden rounded bg-[#3d3d3d]">
                            <button class="flex w-6 items-center justify-center bg-[#545454]" aria-label="Use preview range"><svg class="size-5"><use href="#stopwatch"/></svg></button>
                            <label class="flex w-[111px] items-center bg-[#545454] pb-[2px] pl-[19px] pr-[18px]">Start<input class="min-w-0 flex-1 text-right tabular-nums outline-none" value="1"></label>
                            <label class="flex w-[105px] items-center bg-[#545454] pb-[2px] pl-[19px] pr-[18px]">End<input class="min-w-0 flex-1 text-right tabular-nums outline-none" value="250"></label>
                        </div>
                    </div>
                </div>
                <div id="ruler" class="relative h-[29px] shrink-0 bg-[#1d1d1d] tabular-nums text-[#989898]"></div>
                <div id="track" class="relative min-h-0 flex-1 bg-[#2f2f2f]"></div>
                <div class="absolute bottom-px left-[9px] right-[9px] flex h-[11px] items-center justify-between rounded-full bg-[#545454] px-px"><span class="size-[9px] rounded-full border border-[#6a6a6a] bg-[#2b2b2b]"></span><span class="size-[9px] rounded-full border border-[#6a6a6a] bg-[#2b2b2b]"></span></div>
                <svg class="absolute bottom-[14px] left-0 h-3 w-[7px] text-[#989898]" viewBox="0 0 7 12"><path d="M0 1l5 5-5 5" fill="none" stroke="currentColor" stroke-width="1.300"/></svg>
                <svg class="absolute bottom-[14px] right-0 h-3 w-[7px] text-[#989898]" viewBox="0 0 7 12"><path d="M7 1L2 6l5 5" fill="none" stroke="currentColor" stroke-width="1.300"/></svg>
            </section>
        </div>

        <aside class="flex w-[275px] shrink-0 flex-col gap-[3px]">
            <!-- Outliner -->
            <section class="flex h-[338px] shrink-0 flex-col overflow-hidden rounded-lg border border-[#363636] bg-[#282828]">
                <div class="flex h-8 shrink-0 items-start bg-[#2b2b2b] pl-[9px] pr-[11px] pt-[2px]">
                    <button class="flex h-[25px] w-[39px] items-center gap-1 rounded border border-[#3d3d3d] bg-[#282828] pl-1" aria-label="Editor type"><svg class="size-5"><use href="#tree"/></svg><svg class="size-[9px]"><use href="#down"/></svg></button>
                    <button class="ml-[7px] flex h-[25px] w-[39px] items-center gap-[3px] rounded border border-[#3d3d3d] bg-[#282828] pl-1" aria-label="Display mode"><svg class="size-5"><use href="#layers"/></svg><svg class="size-[9px]"><use href="#down"/></svg></button>
                    <label class="ml-auto flex h-[25px] w-[148px] items-center rounded border border-[#3d3d3d] bg-[#1d1d1d] pl-[5px]" aria-label="Search outliner"><svg class="size-5 shrink-0"><use href="#search"/></svg><input class="min-w-0 flex-1 pb-[2px] pl-[7px] outline-none" placeholder="Search"></label>
                </div>
                <div class="flex h-[25px] shrink-0 items-center pl-[27px] text-[#b8b8b8]"><svg class="mr-[9px] size-[18px] text-[#d9d9d9]"><use href="#box"/></svg>Scene Collection</div>
                <div class="flex h-[25px] shrink-0 items-center bg-[#2b2b2b] pl-[29px] pr-3 text-white">
                    <svg class="mr-[6px] size-[14px] text-[#999]"><use href="#open"/></svg><span class="mr-[6px] flex size-6 items-center justify-center rounded border border-[#707070] bg-[#545454] text-[#e6e6e6]"><svg class="size-[18px]"><use href="#box"/></svg></span>Collection
                    <span class="ml-auto flex items-center text-[#e6e6e6]"><label class="relative flex"><input type="checkbox" checked class="size-[14px] appearance-none" aria-label="Exclude collection"><svg class="pointer-events-none absolute inset-0 size-[14px]"><use href="#check"/></svg></label><button class="ml-2" aria-label="Hide"><svg class="size-5"><use href="#eye"/></svg></button><button class="ml-[5px]" aria-label="Render"><svg class="size-5"><use href="#camera"/></svg></button></span>
                </div>
                <div class="flex h-[25px] shrink-0 items-center bg-[#334d80] pr-3 text-[#ffaf29]">
                    <span class="ml-9 mr-[17px] h-full w-px border-l border-[#6c6c6c]"></span><svg class="mr-[6px] size-[14px] text-[#b0b0b0]"><use href="#closed"/></svg><span class="mr-[6px] flex size-6 items-center justify-center rounded border border-[#7084ab] bg-[#5a6e97] text-[#d9925a]"><svg class="size-5"><use href="#mesh-solid"/></svg></span>Cube
                    <svg class="ml-[26px] size-5 text-[#18b092]"><use href="#mesh"/></svg>
                    <span class="ml-auto flex items-center text-[#e6e6e6]"><button aria-label="Hide"><svg class="size-5"><use href="#eye"/></svg></button><button class="ml-[5px]" aria-label="Render"><svg class="size-5"><use href="#camera"/></svg></button></span>
                </div>
                <div class="flex h-[25px] shrink-0 items-center bg-[#2b2b2b] pr-3 text-[#b8b8b8]">
                    <span class="mb-1 ml-9 mr-[17px] h-5 w-px border-l border-[#6c6c6c]"></span><svg class="mr-[6px] size-[14px] text-[#b0b0b0]"><use href="#closed"/></svg><span class="mr-[6px] flex size-6 items-center justify-center text-[#c78047]"><svg class="size-5"><use href="#bulb"/></svg></span>Light
                    <svg class="ml-[26px] size-5 text-[#18a07c]"><use href="#light-data"/></svg>
                    <span class="ml-auto flex items-center text-[#e6e6e6]"><button aria-label="Hide"><svg class="size-5"><use href="#eye"/></svg></button><button class="ml-[5px]" aria-label="Render"><svg class="size-5"><use href="#camera"/></svg></button></span>
                </div>
                <div class="min-h-0 flex-1 bg-[repeating-linear-gradient(#282828_0_25px,#2b2b2b_25px_50px)]"></div>
                <div class="mx-[9px] mb-[1px] h-1 shrink-0 rounded-full bg-[#3d3d3d]"></div>
            </section>

            <!-- Properties editor -->
            <section class="flex min-h-0 flex-1 flex-col overflow-hidden rounded-lg border border-[#363636] bg-[#303030]">
                <div class="flex h-[30px] shrink-0 items-start justify-between pl-[9px] pr-1 pt-[2px]">
                    <button class="flex h-[25px] w-[39px] items-center gap-[3px] rounded border border-[#3d3d3d] bg-[#282828] pl-1" aria-label="Editor type"><svg class="size-5"><use href="#props"/></svg><svg class="size-[9px]"><use href="#down"/></svg></button>
                    <label class="ml-[10px] flex h-[25px] w-[148px] items-center rounded border border-[#3d3d3d] bg-[#1d1d1d] pl-[5px]" aria-label="Search properties"><svg class="size-5 shrink-0"><use href="#search"/></svg><input class="min-w-0 flex-1 pb-[2px] pl-[7px] outline-none" placeholder="Search"></label>
                    <button class="flex size-[25px] items-center justify-center rounded border border-[#3d3d3d] bg-[#282828]" aria-label="Options"><svg class="size-[9px]"><use href="#down"/></svg></button>
                </div>
                <div class="flex min-h-0 flex-1">
                    <nav class="flex w-[34px] shrink-0 flex-col bg-[#1d1d1d] pt-[10px] text-[#a8a8a8]">
                        <button class="flex h-[35px] items-center justify-center" aria-label="Tool"><svg class="size-5"><use href="#tool"/></svg></button>
                        <button class="mt-[9px] flex h-[35px] items-center justify-center" aria-label="Render"><svg class="size-5"><use href="#render"/></svg></button>
                        <button class="flex h-[35px] items-center justify-center" aria-label="Output"><svg class="size-5"><use href="#output"/></svg></button>
                        <button class="flex h-[35px] items-center justify-center" aria-label="View layer"><svg class="size-5"><use href="#layers"/></svg></button>
                        <button class="flex h-[35px] items-center justify-center" aria-label="Scene"><svg class="size-5"><use href="#scene"/></svg></button>
                        <button class="flex h-[35px] items-center justify-center text-[#b3545c]" aria-label="World"><svg class="size-5"><use href="#world"/></svg></button>
                        <button class="mt-[9px] flex h-[35px] items-center justify-center" aria-label="Collection"><svg class="size-5"><use href="#box-line"/></svg></button>
                        <button class="mt-[9px] flex h-[35px] items-center justify-center rounded-l-md bg-[#303030] text-[#e6975a]" aria-label="Object"><svg class="size-5"><use href="#object"/></svg></button>
                        <button class="flex h-[35px] items-center justify-center text-[#5d83d6]" aria-label="Modifiers"><svg class="size-5"><use href="#wrench"/></svg></button>
                        <button class="flex h-[35px] items-center justify-center text-[#5d83d6]" aria-label="Particles"><svg class="size-5"><use href="#particles"/></svg></button>
                        <button class="flex h-[35px] items-center justify-center text-[#5d83d6]" aria-label="Physics"><svg class="size-5"><use href="#physics"/></svg></button>
                        <button class="flex h-[35px] items-center justify-center text-[#5d83d6]" aria-label="Constraints"><svg class="size-5"><use href="#constraint"/></svg></button>
                        <button class="flex h-[35px] items-center justify-center text-[#10a878]" aria-label="Data"><svg class="size-5"><use href="#mesh"/></svg></button>
                        <button class="flex h-[35px] items-center justify-center text-[#b3545c]" aria-label="Material"><svg class="size-5"><use href="#material"/></svg></button>
                    </nav>
                    <div class="flex min-w-0 flex-1 flex-col overflow-hidden pl-[10px] pr-[2px]">
                        <div class="mt-3 flex h-[22px] shrink-0 items-center pl-[2px] pr-[3px]"><svg class="mr-[10px] size-5"><use href="#object"/></svg><span class="pb-[2px]">Cube</span><button class="ml-auto text-[#8f8f8f]" aria-label="Pin"><svg class="size-5"><use href="#pin"/></svg></button></div>
                        <div class="mt-[21px] flex h-[25px] shrink-0 overflow-hidden rounded border border-[#3d3d3d] bg-[#1d1d1d]">
                            <button class="flex w-[39px] shrink-0 items-center gap-[3px] border-r border-[#3d3d3d] bg-[#282828] pl-[3px]" aria-label="Browse object"><svg class="size-5"><use href="#object"/></svg><svg class="size-[9px]"><use href="#down"/></svg></button>
                            <input class="min-w-0 flex-1 pb-[2px] pl-[9px] outline-none" value="Cube" aria-label="Object name">
                        </div>
                        <div class="mt-3 flex h-[350px] shrink-0 flex-col rounded bg-[#3d3d3d]">
                            <button class="flex h-[31px] items-center pl-[9px] pr-2"><svg class="mr-1 size-[14px] text-[#b0b0b0]"><use href="#open"/></svg>Transform<svg class="ml-auto h-2 w-4"><use href="#grip"/></svg></button>
                            <div id="transform" class="flex flex-col gap-[7px] pt-[11px]"></div>
                            <button class="mt-[14px] flex h-6 items-center pl-[26px]"><svg class="mr-1 size-[14px] text-[#b0b0b0]"><use href="#closed"/></svg>Delta Transform</button>
                        </div>
                        <div id="panels" class="mt-[2px] flex flex-col gap-[2px]"></div>
                    </div>
                    <div class="mr-px mt-[2px] h-[594px] w-[5px] shrink-0 rounded-full bg-[#3d3d3d]"></div>
                </div>
            </section>
        </aside>
    </main>

    <!-- Status bar -->
    <footer class="flex h-[26px] shrink-0 items-center pl-3 pr-[15px] pt-1 text-[#989898]">
        <svg class="mr-[5px] h-5 w-4"><use href="#mouse-l"/></svg>Select
        <svg class="ml-3 mr-[6px] h-5 w-4"><use href="#mouse-m"/></svg>Rotate View
        <svg class="ml-3 mr-[5px] h-5 w-4"><use href="#mouse-r"/></svg>Options
        <svg class="ml-auto mr-[10px] size-5"><use href="#offline"/></svg><span class="mr-[7px] h-4 w-px bg-[#6e6e6e]"></span>4.4.3
    </footer>

    <script>
        // Transform fields, grouped the way they stack in the panel
        const groups = [
            [['Locatio...', '0 m'], ['Y', '0 m'], ['Z', '0 m']],
            [['Rotatio...', '0°'], ['Y', '0°'], ['Z', '0°']],
            [['Mode', 'XYZ ...']],
            [['Scale X', '1.000'], ['Y', '1.000'], ['Z', '1.000']]
        ];
        document.getElementById('transform').innerHTML = groups.map(group => `
            <div class="flex flex-col gap-px">
                ${group.map(([name, value], i) => `
                    <div class="flex h-6 items-center">
                        <label class="flex min-w-0 flex-1 items-center">
                            <span class="min-w-0 flex-1 pb-[2px] text-right">${name}</span>
                            ${name === 'Mode'
                                ? `<span class="ml-3 flex h-6 w-[73px] shrink-0 items-center rounded bg-[#282828] pr-[3px]"><select class="min-w-0 flex-1 appearance-none pb-[2px] pl-[9px] outline-none"><option>${value}</option></select><svg class="size-[9px] shrink-0"><use href="#down"/></svg></span>`
                                : `<input class="ml-3 h-6 w-[73px] shrink-0 bg-[#545454] pb-[2px] text-center tabular-nums outline-none ${i === 0 ? 'rounded-t' : ''} ${i === 2 ? 'rounded-b' : ''}" value="${value}">`}
                        </label>
                        <span class="ml-[3px] mr-3 size-5 shrink-0 text-[#8f8f8f]">${name === 'Mode' ? '' : '<button aria-label="Lock"><svg class="size-5"><use href="#unlock"/></svg></button>'}</span>
                        <span class="mr-5 size-[6px] shrink-0 rounded-full bg-[#e0e0e0]"></span>
                    </div>`).join('')}
            </div>`).join('');

        const panels = ['Relations', 'Collections', 'Instancing', 'Motion Paths', 'Shading', 'Visibility', 'Viewport Display', 'Line Art'];
        document.getElementById('panels').innerHTML = panels.map(name => `
            <button class="flex h-[31px] shrink-0 items-center rounded bg-[#3d3d3d] pl-[9px] pr-2"><svg class="mr-1 size-[14px] text-[#b0b0b0]"><use href="#closed"/></svg>${name}<svg class="ml-auto h-2 w-4"><use href="#grip"/></svg></button>`).join('');

        // Frame number to horizontal position, in percent of the timeline
        const frameX = frame => 3.2 + frame * 0.3724;
        let labels = '';
        let ticks = `<div class="absolute inset-y-0 left-0 bg-[#232323]" style="width:${frameX(1)}%"></div><div class="absolute inset-y-0 right-0 bg-[#232323]" style="left:${frameX(250)}%"></div>`;
        for (let f = 0; f <= 250; f += 10) {
            if (f > 0 && f % 20 === 0) labels += `<span class="absolute top-[5px] -translate-x-1/2" style="left:${frameX(f)}%">${f}</span>`;
            ticks += `<i class="absolute inset-y-0 w-px ${f % 20 === 0 || f === 250 ? 'bg-[#141414]' : 'bg-[#262626]'}" style="left:${frameX(f)}%"></i>`;
        }
        labels += `<span class="absolute top-1 flex h-[21px] w-[30px] -translate-x-1/2 items-center justify-center rounded bg-[#4772b3] text-white" style="left:${frameX(1)}%">1</span>`;
        labels += `<i class="absolute bottom-0 h-1 w-[2px] -translate-x-1/2 bg-[#4772b3]" style="left:${frameX(1)}%"></i>`;
        ticks += `<i class="absolute inset-y-0 w-[2px] -translate-x-1/2 bg-[#4772b3]" style="left:${frameX(1)}%"></i>`;
        document.getElementById('ruler').innerHTML = labels;
        document.getElementById('track').innerHTML = ticks;
    </script>
</body>
</html>
